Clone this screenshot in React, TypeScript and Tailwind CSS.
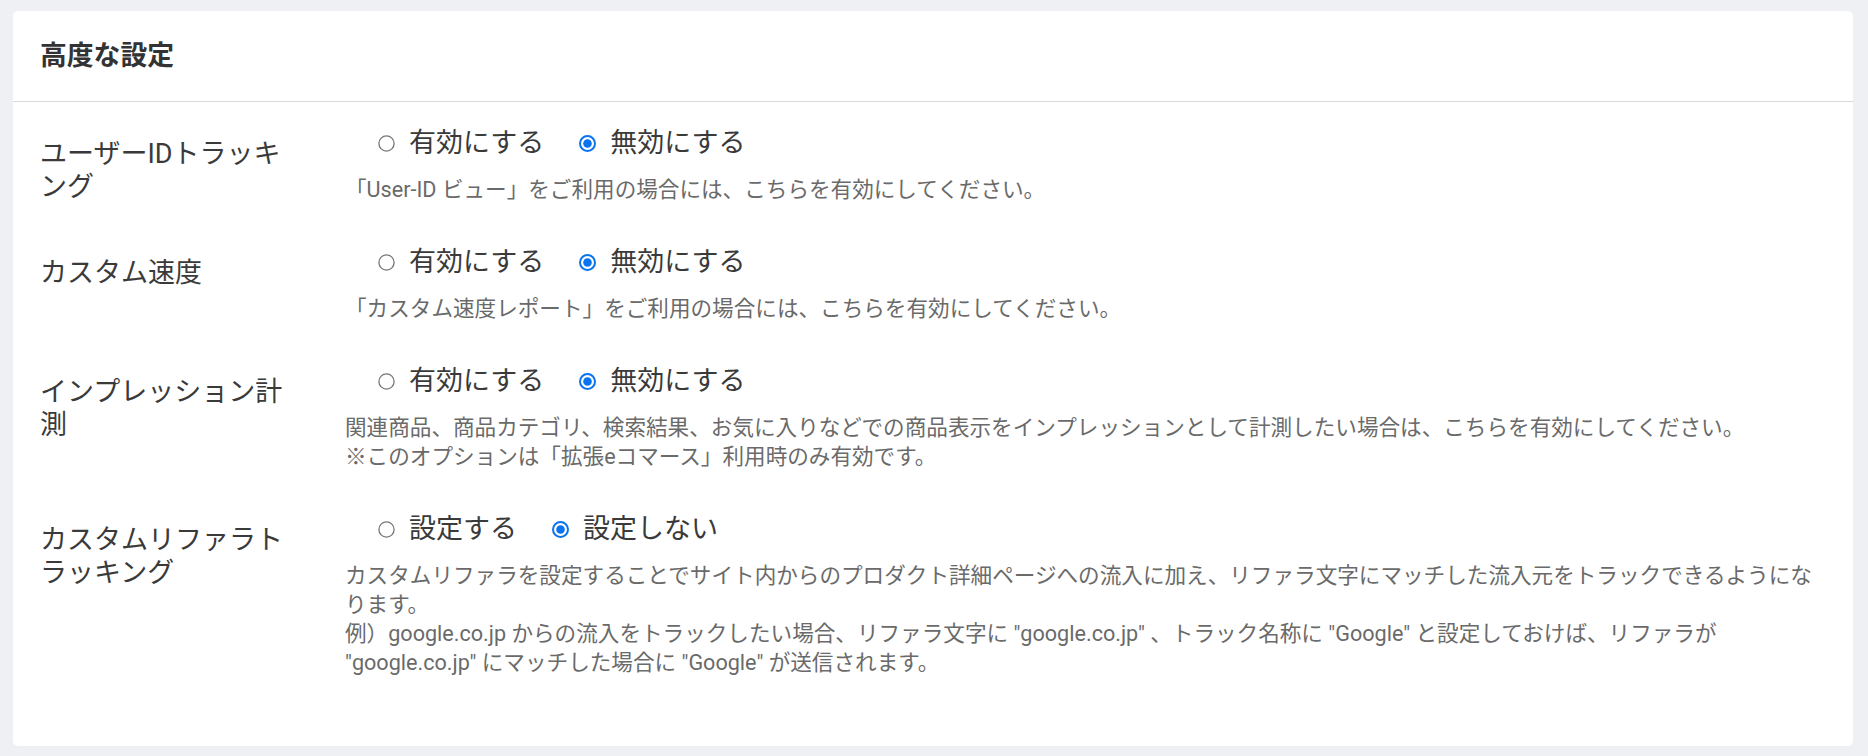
import { useState } from 'react';

interface Setting {
  key: string;
  label: string;
  options: [string, string];
  desc: string[];
}

const SETTINGS: Setting[] = [
  {
    key: 'userid',
    label: 'ユーザーIDトラッキング',
    options: ['有効にする', '無効にする'],
    desc: ['「User-ID ビュー」をご利用の場合には、こちらを有効にしてください。'],
  },
  {
    key: 'speed',
    label: 'カスタム速度',
    options: ['有効にする', '無効にする'],
    desc: ['「カスタム速度レポート」をご利用の場合には、こちらを有効にしてください。'],
  },
  {
    key: 'impression',
    label: 'インプレッション計測',
    options: ['有効にする', '無効にする'],
    desc: [
      '関連商品、商品カテゴリ、検索結果、お気に入りなどでの商品表示をインプレッションとして計測したい場合は、こちらを有効にしてください。',
      '※このオプションは「拡張eコマース」利用時のみ有効です。',
    ],
  },
  {
    key: 'referrer',
    label: 'カスタムリファラトラッキング',
    options: ['設定する', '設定しない'],
    desc: [
      'カスタムリファラを設定することでサイト内からのプロダクト詳細ページへの流入に加え、リファラ文字にマッチした流入元をトラックできるようになります。',
      '例）google.co.jp からの流入をトラックしたい場合、リファラ文字に "google.co.jp" 、トラック名称に "Google" と設定しておけば、リファラが "google.co.jp" にマッチした場合に "Google" が送信されます。',
    ],
  },
];

const RadioDot = ({ checked }: { checked: boolean }) =>
  checked ? (
    <svg width="17" height="17" viewBox="0 0 17 17" className="shrink-0">
      <circle cx="8.5" cy="8.5" r="7.5" fill="#fff" stroke="#0b73f0" strokeWidth="2" />
      <circle cx="8.5" cy="8.5" r="4.3" fill="#0b73f0" />
    </svg>
  ) : (
    <svg width="17" height="17" viewBox="0 0 17 17" className="shrink-0">
      <circle cx="8.5" cy="8.5" r="7.6" fill="#fff" stroke="#767676" strokeWidth="1.3" />
    </svg>
  );

const App = () => {
  const [values, setValues] = useState<Record<string, number>>({
    userid: 1,
    speed: 1,
    impression: 1,
    referrer: 1,
  });

  return (
    <div
      className="min-h-[756px] bg-[#eef0f4] pt-[11px] pb-[10px] pl-[13px] pr-[15px]"
      style={{ fontFamily: 'Roboto, "Noto Sans CJK JP", sans-serif' }}
    >
      <div className="rounded-[5px] bg-white">
        {/* Header */}
        <div className="flex h-[91px] items-center border-b border-[#d9d9d9] px-[27px]">
          <h2 className="text-[26.8px] font-bold text-[#333]">高度な設定</h2>
        </div>

        <div className="px-[27px] pt-[24px] pb-[28px]">
          {SETTINGS.map((s) => (
            <div key={s.key} className="mb-[41px] flex">
              <div className="w-[305px] shrink-0 pr-[40px] pt-[12px] text-[27px] leading-[33px] text-[#3a3a3a]">
                {s.label}
              </div>
              <div className="flex-1 pr-[4px]">
                <div className="flex h-[34px] items-center pl-[33px] text-[27px] text-[#3a3a3a]">
                  {s.options.map((o, i) => (
                    <label
                      key={o}
                      onClick={() => setValues({ ...values, [s.key]: i })}
                      className="mr-[35px] flex cursor-pointer items-center gap-[14px]"
                    >
                      <RadioDot checked={values[s.key] === i} />
                      <span>{o}</span>
                    </label>
                  ))}
                </div>
                <p className="mt-[15px] text-[21.6px] leading-[29px] text-[#6a6a6a]">
                  {s.desc.map((d, i) => (
                    <span key={i}>
                      {i > 0 && <br />}
                      {d}
                    </span>
                  ))}
                </p>
              </div>
            </div>
          ))}
        </div>
      </div>
    </div>
  );
};

export default App;
